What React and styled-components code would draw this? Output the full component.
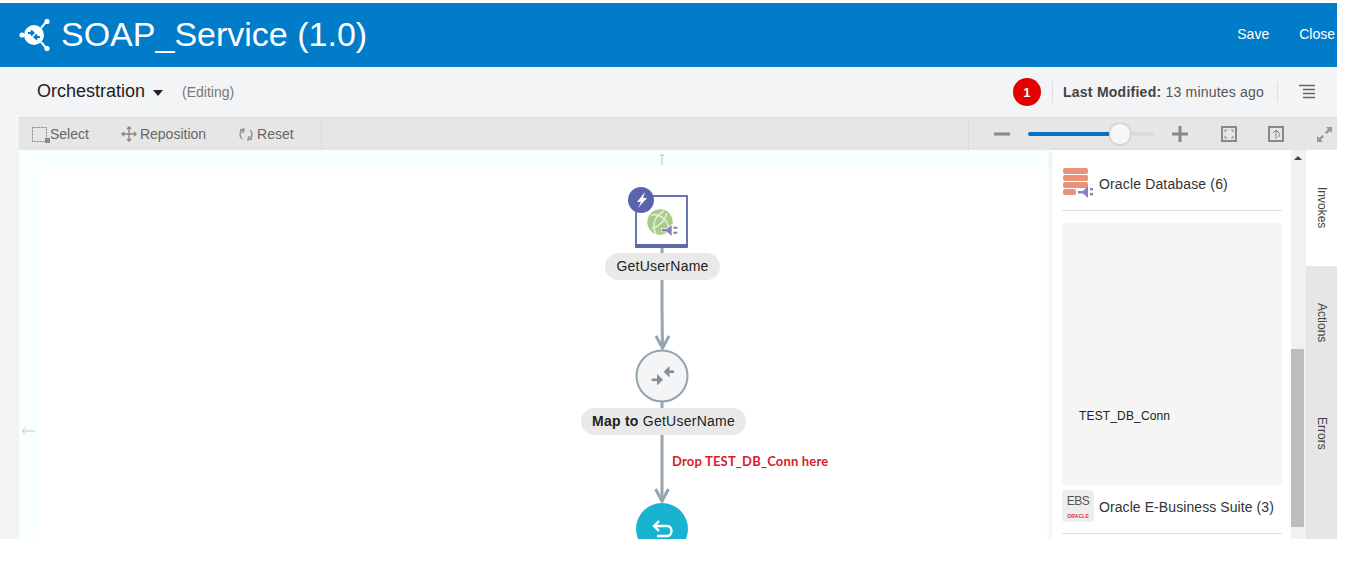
import styled, { createGlobalStyle } from "styled-components";

const GlobalStyle = createGlobalStyle`
  html, body {
    margin: 0;
    padding: 0;
    background: #fff;
    font-family: "Liberation Sans", Arial, sans-serif;
  }
  body {
    padding-top: 3px;
  }
`;

const Page = styled.div`
  width: 1337px;
  height: 536px;
  background: #f3f4f6;
  display: flex;
  flex-direction: column;
  overflow: hidden;
`;

const Header = styled.header`
  height: 64px;
  flex: none;
  background: #007cc8;
  display: flex;
  align-items: center;
  padding: 0 2px 0 19px;
  color: #fff;
`;

const Title = styled.h1`
  margin: 0 0 0 10px;
  font-size: 34px;
  font-weight: normal;
  flex: 1;
  position: relative;
  top: -1px;
`;

const HeaderLink = styled.span`
  font-size: 14px;
  margin-left: ${(p) => p.$gap}px;
  position: relative;
  top: -1px;
`;

const SubBar = styled.div`
  height: 50px;
  flex: none;
  box-sizing: border-box;
  display: flex;
  align-items: center;
  padding: 0 22px 0 37px;
`;

const PageName = styled.span`
  font-size: 18px;
  color: #222;
  position: relative;
  top: -1px;
`;

const Caret = styled.span`
  width: 0;
  height: 0;
  margin: 2px 0 0 8px;
  border-left: 5px solid transparent;
  border-right: 5px solid transparent;
  border-top: 6px solid #222;
`;

const Editing = styled.span`
  font-size: 14px;
  color: #777;
  margin-left: 19px;
  flex: 1;
`;

const Badge = styled.span`
  width: 28px;
  height: 28px;
  border-radius: 50%;
  background: #e30000;
  color: #fff;
  font-size: 13px;
  font-weight: bold;
  display: flex;
  align-items: center;
  justify-content: center;
`;

const VDivider = styled.span`
  width: 1px;
  height: ${(p) => p.$h || 22}px;
  background: #dcdde0;
  margin: ${(p) => p.$m};
`;

const Modified = styled.span`
  font-size: 14px;
  color: #555;
  letter-spacing: 0.2px;

  b {
    color: #444;
    letter-spacing: 0.25px;
  }
`;

const Toolbar = styled.div`
  height: 33px;
  flex: none;
  box-sizing: border-box;
  margin-left: 19px;
  background: #e6e6e6;
  border-top: 1px solid #dfdfda;
  display: flex;
  align-items: center;
  font-size: 14px;
  color: #666;
`;

const ToolGroup = styled.div`
  height: 100%;
  width: ${(p) => p.$w}px;
  box-sizing: border-box;
  border-right: 1px solid #dadada;
  display: flex;
  align-items: center;
  padding-left: 13px;
`;

const ToolButton = styled.span`
  display: flex;
  align-items: center;
  gap: ${(p) => p.$gap}px;
  margin-right: ${(p) => p.$after}px;
`;

const ZoomGroup = styled.div`
  flex: 1;
  height: 100%;
  box-sizing: border-box;
  border-left: 1px solid #dadada;
  margin-left: 646px;
  display: flex;
  align-items: center;
  padding-left: 25px;
`;

const ZoomIcon = styled.svg`
  flex: none;
  margin-left: ${(p) => p.$m}px;
  display: block;
`;

const SliderTrack = styled.div`
  position: relative;
  width: 126px;
  height: 4px;
  margin-left: 18px;
  border-radius: 2px;
  background: #dcdcdc;
`;

const SliderFill = styled.div`
  height: 100%;
  border-radius: 2px;
  background: #0a6fc4;
`;

const SliderThumb = styled.div`
  position: absolute;
  top: -9px;
  left: 81px;
  width: 22px;
  height: 22px;
  box-sizing: border-box;
  border-radius: 50%;
  background: #f7f7f7;
  border: 1px solid #d5d5d5;
  box-shadow: 0 0 2px rgba(0, 0, 0, 0.15);
`;

const Workspace = styled.div`
  flex: 1;
  min-height: 0;
  display: flex;
  background: #f1f3f5;
  padding-left: 19px;
`;

const Canvas = styled.div`
  position: relative;
  flex: 1;
  background: #f7ffff;
  padding: 19px 0 0 19px;
  overflow: hidden;
`;

const CanvasInner = styled.div`
  height: 100%;
  background: #fff;
`;

const DiagramSvg = styled.svg`
  position: absolute;
  left: ${(p) => p.$x}px;
  top: ${(p) => p.$y}px;
  display: block;
`;

const Pill = styled.div`
  position: absolute;
  left: ${(p) => p.$x}px;
  top: ${(p) => p.$y}px;
  width: ${(p) => p.$w}px;
  height: 27px;
  box-sizing: border-box;
  padding-bottom: 2px;
  border-radius: 14px;
  background: #e9e9e9;
  font-size: 14px;
  letter-spacing: 0.25px;
  color: #222;
  display: flex;
  align-items: center;
  justify-content: center;
  white-space: pre;
`;

const DropHint = styled.div`
  position: absolute;
  left: 653px;
  top: 303px;
  font-family: Lato, sans-serif;
  font-size: 13px;
  font-weight: bold;
  letter-spacing: 0.18px;
  color: #d3222a;
  white-space: nowrap;
`;

const Panel = styled.aside`
  width: 239px;
  flex: none;
  box-sizing: border-box;
  background: #fff;
  box-shadow: -2px 0 4px rgba(0, 0, 0, 0.07);
  padding: 0 9px 0 10px;
  overflow: hidden;
  position: relative;
`;

const ConnectorRow = styled.div`
  box-sizing: border-box;
  padding: ${(p) => p.$pad};
  display: flex;
  align-items: center;
  gap: 5px;
  font-size: 14px;
  color: #333;
  border-bottom: 1px solid #dcdcdc;
`;

const ConnectorName = styled.span`
  letter-spacing: ${(p) => p.$ls}px;
  padding-top: ${(p) => p.$top}px;
`;

const ConnList = styled.div`
  height: 262px;
  margin: 12px 0 5px;
  background: #f5f5f5;
  box-sizing: border-box;
  padding: 186px 0 0 17px;
  font-size: 12px;
  letter-spacing: 0.15px;
  color: #222;
  border-radius: 2px;
`;

const EbsIcon = styled.div`
  width: 32px;
  height: 32px;
  flex: none;
  background: #eee;
  border-radius: 3px;
  display: flex;
  flex-direction: column;
  align-items: center;
  padding-top: 5px;
  box-sizing: border-box;
  color: #555;
  font-size: 12px;
  letter-spacing: -0.5px;
  line-height: 13px;
`;

const EbsBrand = styled.span`
  font-size: 5px;
  font-weight: bold;
  color: #d8303a;
  letter-spacing: 0.1px;
  line-height: 8px;
  margin-top: 4px;
`;

const ScrollBar = styled.div`
  width: 15px;
  flex: none;
  background: #f1f1f1;
  position: relative;
`;

const ScrollArrow = styled.span`
  position: absolute;
  top: 6px;
  left: 3px;
  border-left: 4px solid transparent;
  border-right: 4px solid transparent;
  border-bottom: 4px solid #444;
`;

const ScrollThumb = styled.div`
  position: absolute;
  top: 199px;
  left: 0;
  width: 13px;
  height: 178px;
  background: #bdbdbd;
`;

const Tabs = styled.nav`
  width: 31px;
  flex: none;
  display: flex;
  flex-direction: column;
  background: #e6e6e6;
`;

const Tab = styled.div`
  height: ${(p) => p.$h}px;
  flex: none;
  box-sizing: border-box;
  background: ${(p) => (p.$active ? "#fff" : "transparent")};
  writing-mode: vertical-rl;
  font-size: 12px;
  color: #444;
  display: flex;
  align-items: center;
  padding-top: ${(p) => p.$top}px;
  padding-left: 1px;
`;

const DbIcon = () => (
  <svg width="32" height="32" viewBox="0 0 32 32">
    <rect x="1" y="2" width="25" height="6" rx="2" fill="#e8937a" />
    <rect x="1" y="9" width="25" height="6" rx="2" fill="#e8937a" />
    <rect x="1" y="16" width="25" height="6" rx="2" fill="#e8937a" />
    <rect x="1" y="23" width="13" height="6" rx="2" fill="#e8937a" />
    <path d="M16 25 H21 L26 20 V32 L21 27.5 H16 Z" fill="#8a80bf" />
    <rect x="28" y="22" width="3" height="2.4" fill="#8a80bf" />
    <rect x="28" y="27" width="3" height="2.4" fill="#8a80bf" />
  </svg>
);

const Logo = () => (
  <svg width="32" height="32" viewBox="0 2 32 32">
    <path d="M4 18 H10 M22 11 L28 4 M22 25 L28 32" stroke="#fff" strokeWidth="2" fill="none" />
    <circle cx="3" cy="18" r="2.6" fill="#fff" />
    <circle cx="28" cy="4.5" r="2.6" fill="#fff" />
    <circle cx="28" cy="31.5" r="2.6" fill="#fff" />
    <circle cx="15" cy="18" r="10" fill="#fff" />
    <path d="M9 16 H14 M12 13.5 L14.5 16 L12 18.5 M21 20 H16 M18 17.5 L15.5 20 L18 22.5" stroke="#007cc8" strokeWidth="2" fill="none" />
  </svg>
);

const App = () => {
  return (
    <>
      <GlobalStyle />
      <Page>
        <Header>
          <Logo />
          <Title>SOAP_Service (1.0)</Title>
          <HeaderLink $gap={0}>Save</HeaderLink>
          <HeaderLink $gap={30}>Close</HeaderLink>
        </Header>

        <SubBar>
          <PageName>Orchestration</PageName>
          <Caret />
          <Editing>(Editing)</Editing>
          <Badge>1</Badge>
          <VDivider $m="0 10px 0 11px" />
          <Modified>
            <b>Last Modified:</b> 13 minutes ago
          </Modified>
          <VDivider $m="0 21px 0 13px" $h={20} />
          <svg width="16" height="16" viewBox="0 0 16 16">
            <path d="M0 1.5 H16 M4 5.5 H16 M4 9.5 H16 M4 13.5 H16" stroke="#666" strokeWidth="1.4" />
          </svg>
        </SubBar>

        <Toolbar>
          <ToolGroup $w={303}>
            <ToolButton $gap={0} $after={32}>
              <svg width="18" height="17" viewBox="0 0 18 17">
                <rect x="0.5" y="1.5" width="14" height="14" fill="none" stroke="#888" strokeDasharray="2 1" />
                <rect x="13" y="12" width="5" height="5" fill="#888" />
              </svg>
              Select
            </ToolButton>
            <ToolButton $gap={3} $after={33}>
              <svg width="16" height="16" viewBox="0 0 16 16" fill="none" stroke="#888" strokeWidth="1.4">
                <path d="M8 1 V15 M1 8 H15 M6 3 L8 1 L10 3 M6 13 L8 15 L10 13 M3 6 L1 8 L3 10 M13 6 L15 8 L13 10" />
              </svg>
              Reposition
            </ToolButton>
            <ToolButton $gap={4} $after={0}>
              <svg width="14" height="15" viewBox="0 0 14 15" fill="none" stroke="#999" strokeWidth="1.6">
                <path d="M5 2 A6 6 0 0 0 3 12 M1 3 L5 2 L4 6 M9 13 A6 6 0 0 0 11 3 M13 12 L9 13 L10 9" />
              </svg>
              Reset
            </ToolButton>
          </ToolGroup>
          <ZoomGroup>
            <ZoomIcon $m={0} width="16" height="16" viewBox="0 0 16 16">
              <rect y="6.5" width="16" height="3" fill="#888" />
            </ZoomIcon>
            <SliderTrack>
              <SliderFill style={{ width: "65%" }} />
              <SliderThumb />
            </SliderTrack>
            <ZoomIcon $m={18} width="16" height="16" viewBox="0 0 16 16">
              <path d="M0 6.5 H16 V9.5 H0 Z M6.5 0 H9.5 V16 H6.5 Z" fill="#888" />
            </ZoomIcon>
            <ZoomIcon $m={33} width="16" height="16" viewBox="0 0 16 16" fill="none" stroke="#888">
              <rect x="1" y="1" width="14" height="14" strokeWidth="2" />
              <path d="M4 6 V4 H6 M10 4 H12 V6 M12 10 V12 H10 M6 12 H4 V10" strokeWidth="1" />
            </ZoomIcon>
            <ZoomIcon $m={31} width="16" height="16" viewBox="0 0 16 16" fill="none" stroke="#888">
              <rect x="1" y="1" width="14" height="14" strokeWidth="2" />
              <path d="M8 13 V5 M5 7 L8 4 L11 7 M8 5 C11 5 12 8 11 11" strokeWidth="1" />
            </ZoomIcon>
            <ZoomIcon $m={33} width="15" height="15" viewBox="0 0 15 15" fill="#999">
              <path d="M15 0 V6 L13 4 L9.5 7 L8 5.5 L11 2 L9 0 Z M0 15 V9 L2 11 L5.5 8 L7 9.5 L4 13 L6 15 Z" />
            </ZoomIcon>
          </ZoomGroup>
        </Toolbar>

        <Workspace>
          <Canvas>
            <CanvasInner />
            <DiagramSvg $x={0} $y={0} width="1033" height="389" viewBox="0 0 1033 389" fill="none">
              {/* scroll hints */}
              <path d="M643 15 V4 M640.5 6.5 L643 4 L645.5 6.5" stroke="#bcc4c8" />
              <path d="M16 281 H3 M6.5 278 L3 281 L6.5 284" stroke="#c4c8cb" />

              {/* connectors */}
              <g stroke="#97a5b0" strokeWidth="3">
                <path d="M643 96 V104 M643 130 V160 L643.5 198" />
                <path d="M643 252 V260 M643 285 V352" />
                <path d="M637 186 L643.5 198 L650 186" />
                <path d="M636.5 339 L643 351 L649.5 339" />
              </g>

              {/* service node */}
              <rect x="617" y="46" width="51" height="50" fill="#fff" stroke="#5b67ae" strokeWidth="1.8" />
              <rect x="616" y="94" width="53" height="4" rx="1" fill="#5b67ae" />
              <circle cx="622" cy="50" r="13" fill="#5a64ad" />
              <path d="M626 42 L618 52 L622 52 L619 58 L628 48 L624 48 Z" fill="#fff" />
              <circle cx="641" cy="72" r="12.7" fill="#a9cb85" />
              <path d="M632 65 C641 63 649 70 650 80 M637 84 C632 75 636 66 645 61 M633 79 C640 76 646 71 648 63" stroke="#e2eed6" strokeWidth="1.6" />
              <path d="M642.7 79 H647.7 L652.7 75 V86 L647.7 81.5 H642.7 Z" fill="#fff" stroke="#fff" strokeWidth="1.5" />
              <path d="M642.7 79 H647.7 L652.7 75 V86 L647.7 81.5 H642.7 Z M654.3 76.7 H658.3 V78.7 H654.3 Z M654.3 81.7 H658.3 V83.7 H654.3 Z" fill="#8a80bf" />

              {/* map node */}
              <circle cx="643" cy="226" r="25.5" fill="#f4f5f6" stroke="#94a2ac" strokeWidth="2" />
              <path d="M632.7 229.8 H640" stroke="#888e94" strokeWidth="2.6" />
              <path d="M638 224 L644 229.8 L638 235.6 Z" fill="#888e94" />
              <path d="M655 221.7 H648" stroke="#888e94" strokeWidth="2.6" />
              <path d="M650.5 215.9 L644.7 221.7 L650.5 227.5 Z" fill="#888e94" />

              {/* return node */}
              <circle cx="643" cy="379" r="26" fill="#17b3d0" />
              <path d="M635 376 H648 C654 376 654 386 648 386 H638 M640 371 L635 376 L640 381" stroke="#fff" strokeWidth="2.4" />
            </DiagramSvg>
            <Pill $x={586} $y={103} $w={115}>GetUserName</Pill>
            <Pill $x={562} $y={258} $w={165}>
              <b>Map to</b> GetUserName
            </Pill>
            <DropHint>Drop TEST_DB_Conn here</DropHint>
          </Canvas>

          <Panel>
            <ConnectorRow $pad="16px 0 12px">
              <DbIcon />
              <ConnectorName $ls={0.15} $top={4}>Oracle Database (6)</ConnectorName>
            </ConnectorRow>
            <ConnList>TEST_DB_Conn</ConnList>
            <ConnectorRow $pad="0 0 11px">
              <EbsIcon>
                EBS
                <EbsBrand>ORACLE</EbsBrand>
              </EbsIcon>
              <ConnectorName $ls={0.08} $top={2}>Oracle E-Business Suite (3)</ConnectorName>
            </ConnectorRow>
          </Panel>

          <ScrollBar>
            <ScrollArrow />
            <ScrollThumb />
          </ScrollBar>

          <Tabs>
            <Tab $h={116} $active $top={37}>Invokes</Tab>
            <Tab $h={115} $top={37}>Actions</Tab>
            <Tab $h={158} $top={36}>Errors</Tab>
          </Tabs>
        </Workspace>
      </Page>
    </>
  );
};

export default App;
